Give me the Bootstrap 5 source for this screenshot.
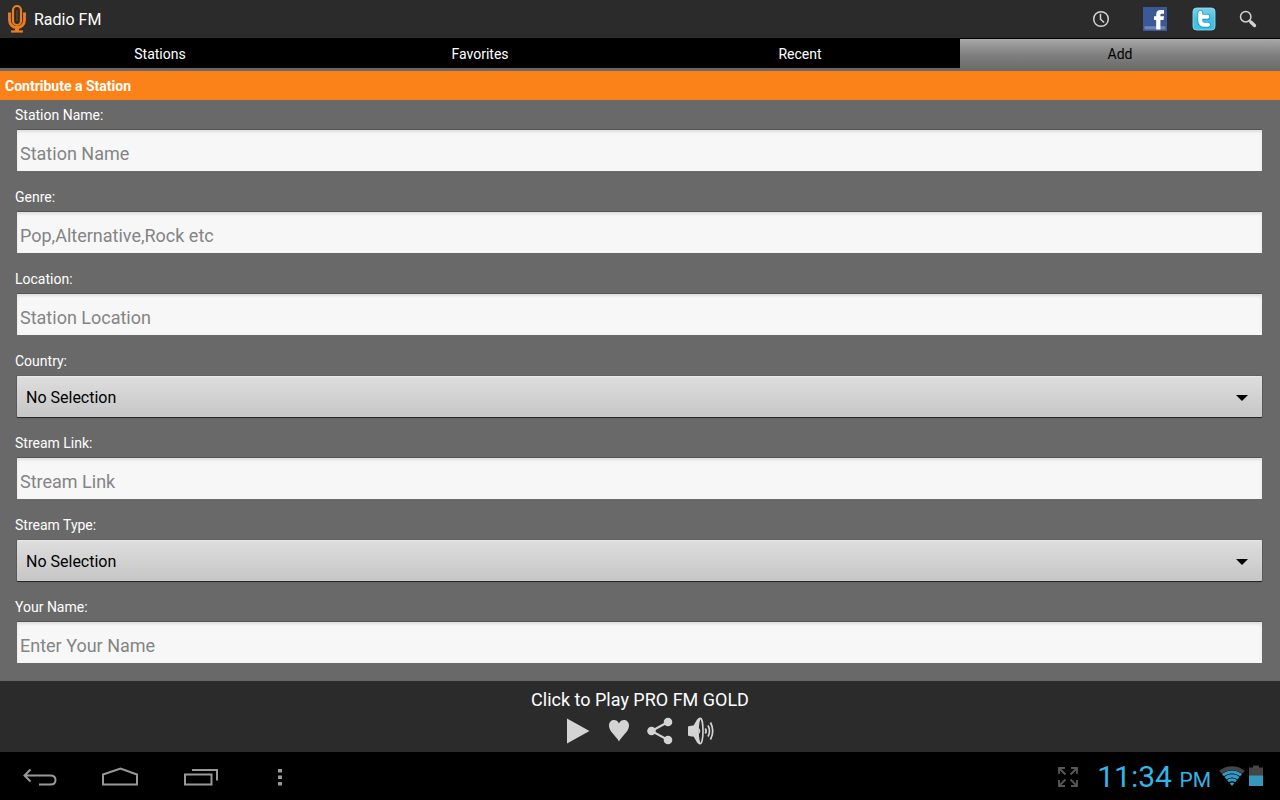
<!DOCTYPE html>
<html lang="en">
<head>
<meta charset="utf-8">
<meta name="viewport" content="width=device-width, initial-scale=1">
<title>Radio FM</title>
<link rel="stylesheet" href="https://cdn.jsdelivr.net/npm/bootstrap@5.3.0/dist/css/bootstrap.min.css">
<style>
  body { font-family: Roboto, sans-serif; font-size: 14px; line-height: 20px; background: #696969; color: #fff; }
  svg { display: block; }
  .bare { background: none; border: 0; padding: 0; color: inherit; display: block; }
  .app-bar { height: 39px; background: #2b2b2b; border-bottom: 1px solid #000; padding: 0 23px 0 6px; }
  .app-title { font-size: 16px; line-height: 22px; padding: 2px 0 0 6px; }
  .actions { gap: 25px; }
  .actions button:last-child { margin-left: -2px; }
  .tabs { height: 32px; background: #696969; }
  .tabs .nav-link { height: 29px; padding: 5px 0 4px; line-height: 20px; color: #fff; background: #000; border-radius: 0; }
  .tabs .nav-link.active { height: 32px; color: #000; background: linear-gradient(#a8a8a8, #7f7f7f 50%, #696969); }
  .section-title { height: 29px; line-height: 30px; padding-left: 5px; font-size: 14px; font-weight: 700; background: #fa8219; }
  .fields { padding: 0 18px 7px 17px; }
  .field { padding-bottom: 11px; }
  .field label { display: block; height: 30px; line-height: 30px; margin-left: -2px; }
  .field .form-control { height: 41px; padding: 5px 3px 0; font-size: 18px; line-height: 34px; border: 0; border-radius: 0; background: #f7f7f7; box-shadow: 0 -1px 0 #555, inset 0 2px 3px #ddd; color: #000; }
  .field .form-control::placeholder { color: #848484; opacity: 1; }
  .field .form-select { height: 41px; padding: 2px 40px 0 9px; font-size: 16px; color: #000; border: 0; border-radius: 1px; box-shadow: 0 1px 1px #222, 0 0 1px #222, inset 0 1px 0 #e8e8e8;
    background: url("data:image/svg+xml,%3Csvg xmlns='http://www.w3.org/2000/svg' viewBox='0 0 12 6'%3E%3Cpath d='M0 0h12L6 6z'/%3E%3C/svg%3E") right 14px top 19px / 12px 6px no-repeat, linear-gradient(#dedede, #c6c6c6); }
  .player { height: 71px; background: #2b2b2b; }
  .now { font-size: 18px; line-height: 24px; padding-top: 7px; }
  .controls { gap: 15px; color: #d4d4d4; }
  .system-bar { height: 48px; background: #000; padding: 2px 17px 0 22px; }
  .keys { gap: 44px; }
  .keys button:last-child { margin-left: 14px; }
  .clock { color: #33b5e5; font-size: 30px; line-height: 34px; padding: 2px 0 0 1px; }
  .clock span { font-size: 21px; }
</style>
</head>
<body>
<div class="d-flex flex-column min-vh-100">
  <header class="app-bar d-flex align-items-center">
    <svg width="22" height="30" viewBox="0 0 22 30" fill="none" stroke="#ec7f1c">
      <rect x="7" y="2" width="8" height="19" rx="4" stroke-width="2.2"/>
      <path d="M11 6v11" stroke="#8a4c16" stroke-width="1"/>
      <path d="M3.500 9v7c0 10 15 10 15 0V9" stroke-width="2.800"/>
      <path d="M2 9.500h3M17 9.500h3" stroke-width="2"/>
      <path d="M11 23v4" stroke-width="4"/><path d="M5 27.500h12" stroke-width="2.200"/>
    </svg>
    <div class="app-title me-auto">Radio FM</div>
    <div class="actions d-flex align-items-center">
      <button class="bare" aria-label="Sleep timer"><svg width="18" height="18" viewBox="0 0 18 18" fill="none" stroke="#d4d4d4"><circle cx="9" cy="9" r="7.300" stroke-width="1.500"/><path d="M8.500 3.800v5.400l3.700 3.300" stroke-width="1.500"/></svg></button>
      <a class="bare ms-2" href="#" aria-label="Facebook"><svg width="24" height="24" viewBox="0 0 24 24"><path fill="#3b5998" d="M0 0h24v24H0z"/><path fill="#7085b6" d="M1.500 19.200h21v3.200h-21z"/><path fill="#fff" d="M13.200 22.500V13H11V9.300h2.200V7.500c0-3.200 1.700-4.500 4.700-4.500H21v3.800h-1.900c-1.300 0-1.700.4-1.700 1.500v1H21l-.5 3.700h-3.100v9.500z"/></svg></a>
      <a class="bare" href="#" aria-label="Twitter"><svg width="24" height="24" viewBox="0 0 24 24"><defs><linearGradient id="tw" x2="0" y2="1"><stop stop-color="#78d2ec"/><stop offset=".5" stop-color="#4abfe2"/><stop offset="1" stop-color="#35c5e8"/></linearGradient></defs><rect x="1" y="1" width="22" height="22" rx="3.500" fill="url(#tw)" stroke="#9be0f2" stroke-width=".8"/><path d="M8.300 6v8q0 4 4.200 4H16M8.300 10h7" fill="none" stroke="#259dc4" stroke-width="5.800" stroke-linecap="round"/><path d="M8.300 5.700v8q0 4 4.200 4H16M8.300 9.800h7" fill="none" stroke="#fff" stroke-width="4" stroke-linecap="round"/></svg></a>
      <button class="bare" aria-label="Search"><svg width="18" height="18" viewBox="0 0 18 18" fill="none" stroke="#d4d4d4"><circle cx="6.700" cy="6.700" r="5.200" stroke-width="1.500"/><path d="M10.500 10.500l1.500 1.500" stroke-width="1.500"/><path d="M11.800 12l3.700 3.500" stroke-width="3.300" stroke-linecap="round"/></svg></button>
    </div>
  </header>

  <nav class="tabs nav nav-justified align-items-start">
    <a class="nav-link" href="#">Stations</a>
    <a class="nav-link" href="#">Favorites</a>
    <a class="nav-link" href="#">Recent</a>
    <a class="nav-link active" href="#" aria-current="page">Add</a>
  </nav>

  <main class="flex-grow-1">
    <h1 class="section-title mb-0">Contribute a Station</h1>
    <form class="fields">
      <div class="field"><label for="station">Station Name:</label><input class="form-control" id="station" type="text" placeholder="Station Name"></div>
      <div class="field"><label for="genre">Genre:</label><input class="form-control" id="genre" type="text" placeholder="Pop,Alternative,Rock etc"></div>
      <div class="field"><label for="location">Location:</label><input class="form-control" id="location" type="text" placeholder="Station Location"></div>
      <div class="field"><label for="country">Country:</label><select class="form-select" id="country"><option>No Selection</option></select></div>
      <div class="field"><label for="link">Stream Link:</label><input class="form-control" id="link" type="text" placeholder="Stream Link"></div>
      <div class="field"><label for="type">Stream Type:</label><select class="form-select" id="type"><option>No Selection</option></select></div>
      <div class="field"><label for="person">Your Name:</label><input class="form-control" id="person" type="text" placeholder="Enter Your Name"></div>
    </form>
  </main>

  <section class="player text-center">
    <div class="now">Click to Play PRO FM GOLD</div>
    <div class="controls d-flex justify-content-center align-items-center pt-1">
      <button class="bare" aria-label="Play"><svg width="26" height="30" viewBox="0 0 26 30" fill="currentColor"><path d="M2 2.500L24.500 15 2 27.500z"/></svg></button>
      <button class="bare" aria-label="Favorite"><svg width="26" height="30" viewBox="0 0 26 30" fill="currentColor"><path d="M13 25.500C10.500 20.500 3 15.500 3 9.800 3 2.800 11 2.500 13 7.500c2-5 10-4.700 10 2.300 0 5.700-7.500 10.700-10 15.700z"/></svg></button>
      <button class="bare" aria-label="Share"><svg width="26" height="30" viewBox="0 0 26 30" fill="currentColor"><path d="M21 6L4.500 15 21 24" fill="none" stroke="currentColor" stroke-width="2"/><circle cx="21" cy="6" r="4.300"/><circle cx="4.500" cy="15" r="4.300"/><circle cx="21" cy="24" r="4.300"/></svg></button>
      <button class="bare" aria-label="Volume"><svg width="28" height="30" viewBox="0 0 28 30" fill="currentColor"><path d="M0 10.500q3-1 5.500-1C7.500 7 8.500 2.500 12 1.500v27c-3.500-1-4.500-5.500-6.500-8-2.500 0-4-.2-5.500-1q-1.200-4.500 0-9z"/><ellipse cx="12.500" cy="15" rx="2.500" ry="12.600" fill="#2b2b2b" stroke="currentColor" stroke-width="1.600"/><path d="M10.500 11.500q3.500 3.500 0 7z"/><path d="M17.300 12.500q1.600 2.500 0 5M20 9.500q3 5.500 0 11M22.500 6.500q4.500 8.500 0 17" fill="none" stroke="currentColor" stroke-width="1.700"/></svg></button>
    </div>
  </section>

  <footer class="system-bar d-flex align-items-center justify-content-between">
    <div class="keys d-flex align-items-center">
      <button class="bare" aria-label="Back"><svg width="36" height="24" viewBox="0 0 36 24" fill="none" stroke="#999" stroke-width="2"><path d="M2.500 10.500h26q5 0 5 4.500t-5 4.500H17M8.500 4.500l-6 6 6 6"/></svg></button>
      <button class="bare" aria-label="Home"><svg width="38" height="24" viewBox="0 0 38 24" fill="none" stroke="#999" stroke-width="2"><path d="M1 19.500V9.500L18.500 3.500 35 9.500v10z"/></svg></button>
      <button class="bare" aria-label="Recent apps"><svg width="36" height="24" viewBox="0 0 36 24" fill="none" stroke="#999" stroke-width="2"><path d="M1 9.500h26.500v10H1zM8 5h25v10.500"/></svg></button>
      <button class="bare" aria-label="More options"><svg width="4" height="24" viewBox="0 0 4 24" fill="#999"><path d="M0 4h4v3.500H0zM0 10.500h4V14H0zM0 17h4v3.500H0z"/></svg></button>
    </div>
    <div class="d-flex align-items-center">
      <svg class="me-3" width="24" height="24" viewBox="0 0 24 24" fill="none" stroke="#565656" stroke-width="1.800"><path d="M3 9V3h6M3 3l6.500 6.500M15 3h6v6M21 3l-6.500 6.500M3 15v6h6M3 21l6.500-6.500M21 15v6h-6M21 21l-6.500-6.500"/></svg>
      <div class="clock">11:34 <span>PM</span></div>
      <svg class="ms-2" width="26" height="24" viewBox="0 0 26 24"><defs><clipPath id="fan"><path d="M13 21L-2 3V0h30v3z"/></clipPath></defs><g clip-path="url(#fan)" fill="none" stroke="#2f9bc6"><circle cx="13" cy="21" r="3.500" fill="#2f9bc6" stroke="none"/><circle cx="13" cy="21" r="6.300" stroke-width="3"/><circle cx="13" cy="21" r="10.200" stroke-width="3.200"/><circle cx="13" cy="21" r="14" stroke-width="3.200"/><circle cx="13" cy="21" r="17.800" stroke="#454545" stroke-width="4"/></g></svg>
      <svg class="ms-1" width="14" height="24" viewBox="0 0 14 24"><path fill="#454545" d="M0 2.500h4V.5h6v2h4V12H0z"/><path fill="#3399bf" d="M0 10.500h14V21H0z"/></svg>
    </div>
  </footer>
</div>
<script src="https://cdn.jsdelivr.net/npm/bootstrap@5.3.0/dist/js/bootstrap.bundle.min.js"></script>
</body>
</html>
